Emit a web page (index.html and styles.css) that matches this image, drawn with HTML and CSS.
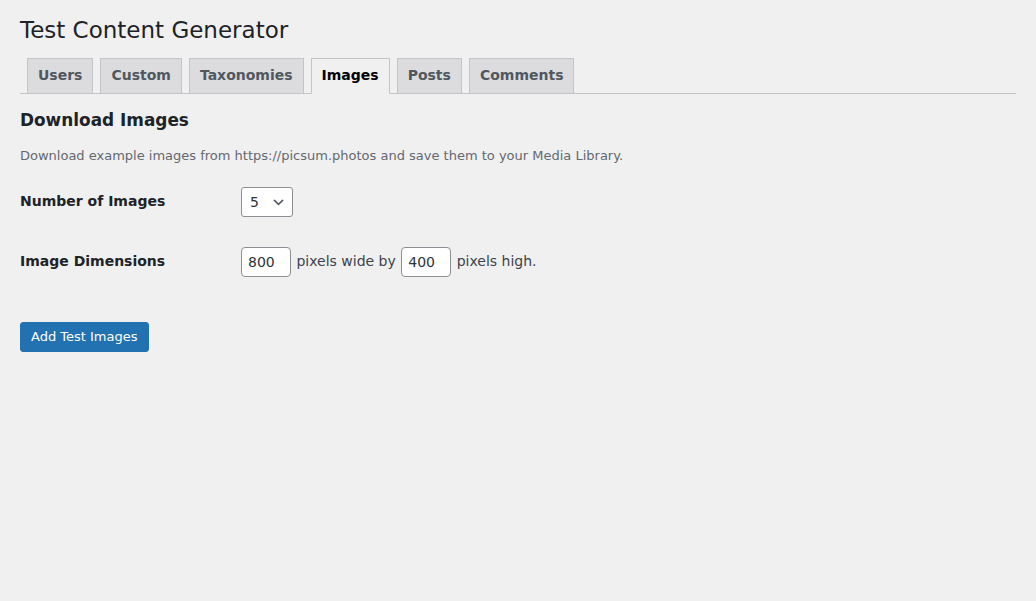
FILE: index.html
```html
<!DOCTYPE html>
<html lang="en">
<head>
<meta charset="utf-8">
<title>Test Content Generator</title>
<link rel="stylesheet" href="styles.css">
</head>
<body>
<div class="wrap">
  <h1 class="page-title">Test Content Generator</h1>
  <nav class="nav-tab-wrapper">
    <a class="nav-tab" href="#">Users</a>
    <a class="nav-tab" href="#">Custom</a>
    <a class="nav-tab" href="#">Taxonomies</a>
    <a class="nav-tab nav-tab-active" href="#">Images</a>
    <a class="nav-tab" href="#">Posts</a>
    <a class="nav-tab" href="#">Comments</a>
  </nav>
  <h2 class="section-title">Download Images</h2>
  <p class="description">Download example images from https://picsum.photos and save them to your Media Library.</p>
  <table class="form-table">
    <tbody>
      <tr>
        <th class="row-label">Number of Images</th>
        <td class="row-field">
          <span class="select"><span class="select-value">5</span><svg class="chevron" width="20" height="20" viewBox="0 0 20 20"><path d="M5 6l5 5 5-5 2 1-7 7-7-7z" fill="#50575e"/></svg></span>
        </td>
      </tr>
      <tr>
        <th class="row-label">Image Dimensions</th>
        <td class="row-field">
          <span class="text-input">800</span> pixels wide by <span class="text-input">400</span> pixels high.
        </td>
      </tr>
    </tbody>
  </table>
  <p class="submit"><button class="button-primary" type="button">Add Test Images</button></p>
</div>
</body>
</html>
```
FILE: styles.css
```css
html, body {
  margin: 0;
  padding: 0;
}
body {
  background: #f0f0f1;
  color: #3c434a;
  font-family: "DejaVu Sans", "Noto Sans", sans-serif;
  font-size: 13px;
  line-height: 1.4em;
  min-height: 601px;
}
.wrap {
  padding: 7px 20px 0 20px;
}
.page-title {
  font-size: 23px;
  font-weight: 400;
  line-height: 1.3;
  margin: 0;
  padding: 9px 0 3px;
  color: #1d2327;
}
.nav-tab-wrapper {
  display: flex;
  border-bottom: 1px solid #c3c4c7;
  padding-top: 9px;
}
.nav-tab {
  display: block;
  margin-left: 7px;
  margin-bottom: -1px;
  padding: 5px 10px 6px;
  border: 1px solid #c3c4c7;
  background: #dcdcde;
  color: #50575e;
  font-size: 14px;
  font-weight: 600;
  line-height: 23px;
  text-decoration: none;
  white-space: nowrap;
}
.nav-tab-active {
  background: #f0f0f1;
  border-bottom-color: #f0f0f1;
  color: #000;
}
.section-title {
  color: #1d2327;
  font-size: 16.9px;
  font-weight: 600;
  margin: 16.9px 0;
  line-height: 18.2px;
}
.description {
  color: #646970;
  font-size: 13px;
  line-height: 1.5;
  margin: 13px 0 7px;
}
.form-table {
  border-collapse: collapse;
  margin-top: 0;
  width: 100%;
}
.row-label {
  width: 200px;
  padding: 20px 10px 20px 0;
  text-align: left;
  vertical-align: top;
  font-weight: 600;
  font-size: 14px;
  line-height: 1.3;
  color: #1d2327;
}
.row-field {
  padding: 15px 10px;
  font-size: 14px;
  line-height: 1.3;
  vertical-align: middle;
  color: #3c434a;
}
.select {
  display: inline-flex;
  align-items: center;
  box-sizing: border-box;
  width: 52px;
  height: 30px;
  margin: 0 1px;
  padding: 0 6px 0 8px;
  border: 1px solid #8c8f94;
  border-radius: 3px;
  background: #fff;
  color: #2c3338;
  font-size: 14px;
  vertical-align: middle;
}
.select-value {
  flex: 1;
}
.chevron {
  width: 15px;
  height: 15px;
}
.text-input {
  display: inline-flex;
  align-items: center;
  box-sizing: border-box;
  width: 50px;
  height: 30px;
  margin: 0 1px;
  padding: 0 6px;
  border: 1px solid #8c8f94;
  border-radius: 4px;
  background: #fff;
  color: #2c3338;
  font-size: 14px;
  vertical-align: middle;
}
.submit {
  margin: 20px 0 0;
  padding: 10px 0 0;
}
.button-primary {
  display: inline-block;
  box-sizing: border-box;
  height: 30px;
  padding: 0 10px;
  border: 1px solid #2271b1;
  border-radius: 3px;
  background: #2271b1;
  color: #fff;
  font-family: "DejaVu Sans", "Noto Sans", sans-serif;
  font-size: 13px;
  line-height: 28px;
}
```
